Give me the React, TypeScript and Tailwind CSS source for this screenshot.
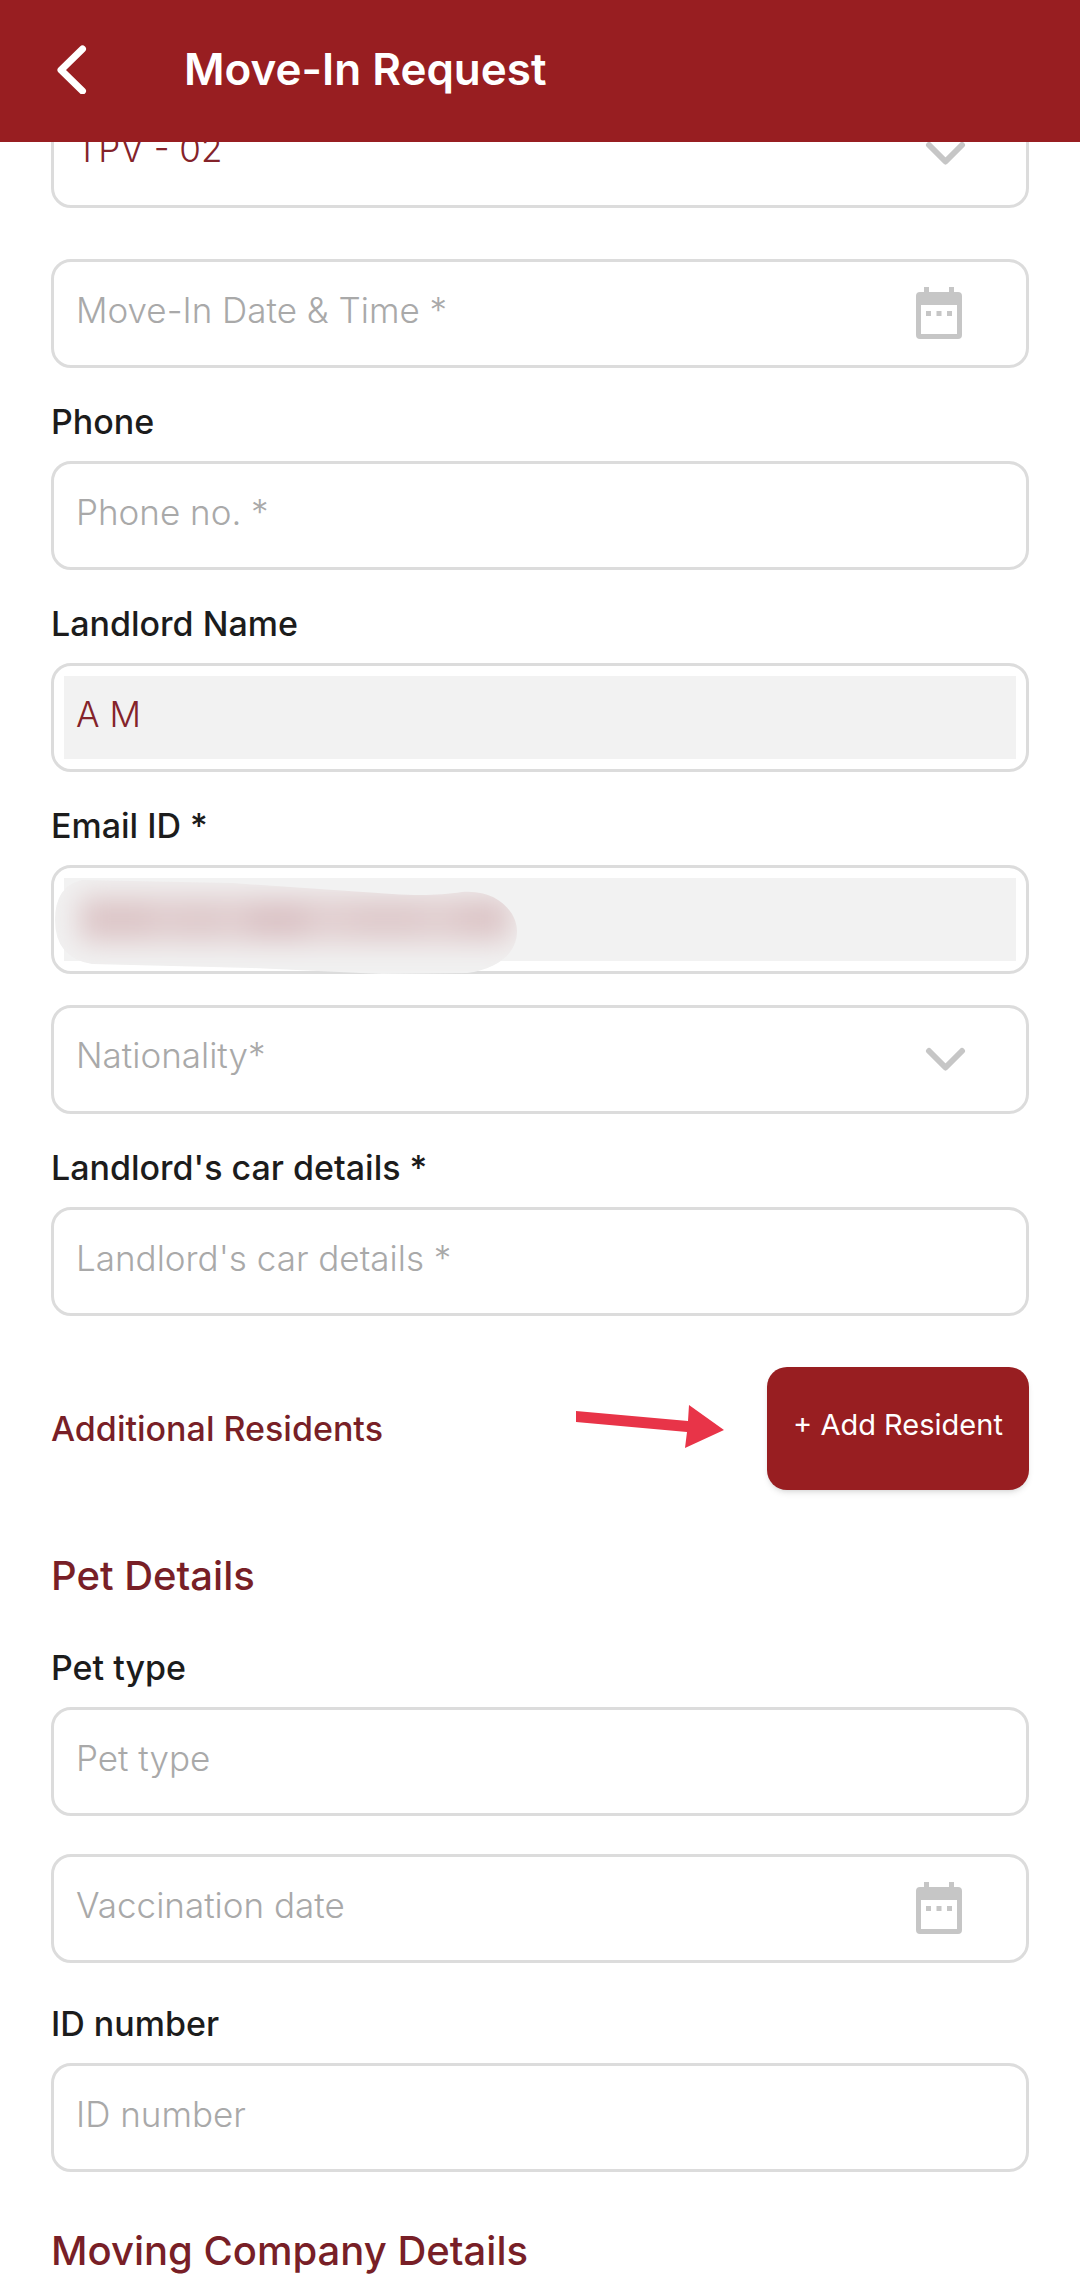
import { type ReactNode } from "react";

const ChevronLeft = () => (
  <svg width="32" height="50" viewBox="0 0 32 50" fill="none" stroke="currentColor" strokeWidth="7" strokeLinecap="round" strokeLinejoin="round">
    <path d="M26.500 5 L5 26 L26.500 47" />
  </svg>
);

const ChevronDown = () => (
  <svg className="pointer-events-none absolute right-15 top-6" width="54" height="54" viewBox="0 0 54 54" fill="none" stroke="#c6c6c6" strokeWidth="6" strokeLinecap="round" strokeLinejoin="round">
    <path d="M17 19 L33.500 35.500 L50 19" />
  </svg>
);

const Calendar = () => (
  <svg className="pointer-events-none absolute right-15 top-6" width="54" height="54" viewBox="0 0 54 54" fill="#c6c6c6">
    <path fillRule="evenodd" d="M8 6 H46 Q50 6 50 10 V49 Q50 53 46 53 H8 Q4 53 4 49 V10 Q4 6 8 6 Z M9 19 V48 H45 V19 Z" />
    <path d="M12 1 h5 v6 h-5 Z M37 1 h5 v6 h-5 Z M14 25 h5 v5 h-5 Z M24.500 25 h5 v5 h-5 Z M35 25 h5 v5 h-5 Z" />
  </svg>
);

// Smudge that hides the private email address
const Redaction = () => (
  <svg className="pointer-events-none absolute -left-0.5 -top-0.5" width="470" height="112" viewBox="0 0 470 112">
    <defs>
      <clipPath id="smudge">
        <path d="M30 14 L180 17 L340 28 C370 30 390 29 410 26 C445 23 465 46 465 65 C465 88 445 103 415 107 L330 108 L200 102 L40 98 Q3 92 3 54 Q3 20 30 14 Z" />
      </clipPath>
      <filter id="smudge-blur" x="-20%" y="-60%" width="140%" height="220%">
        <feGaussianBlur stdDeviation="14" />
      </filter>
    </defs>
    <g clipPath="url(#smudge)">
      <rect width="470" height="112" fill="#f1f1f1" />
      <g filter="url(#smudge-blur)">
        <rect x="26" y="28" width="435" height="50" fill="#e2d0d1" />
        <rect x="32" y="40" width="70" height="28" fill="#dcc4c6" />
        <rect x="120" y="42" width="50" height="26" fill="#dec9cb" />
        <rect x="195" y="40" width="60" height="30" fill="#dac1c4" />
        <rect x="300" y="40" width="70" height="26" fill="#dec9cb" />
        <rect x="405" y="38" width="50" height="28" fill="#dcc4c6" />
      </g>
    </g>
  </svg>
);

const fieldText =
  "block h-[83px] w-full appearance-none bg-transparent px-3 pb-2 text-[35px] font-light outline-none placeholder:text-[#a9a9a9] placeholder:opacity-100 disabled:bg-[#f2f2f2]";

const FieldBox = ({ children }: { children: ReactNode }) => (
  <div className="relative rounded-[20px] border-3 border-[#dcdcdc] p-2.5">{children}</div>
);

const Label = ({ htmlFor, children }: { htmlFor: string; children: ReactNode }) => (
  <label htmlFor={htmlFor} className="mb-4 block text-[34px] leading-[46px] font-medium text-[#1c1c1c]">
    {children}
  </label>
);

type InputFieldProps = {
  id: string;
  label?: string;
  placeholder?: string;
  value?: string;
  disabled?: boolean;
  children?: ReactNode;
};

const InputField = ({ id, label, placeholder, value, disabled, children }: InputFieldProps) => (
  <div>
    {label && <Label htmlFor={id}>{label}</Label>}
    <FieldBox>
      <input
        id={id}
        type="text"
        aria-label={label ? undefined : placeholder}
        placeholder={placeholder}
        defaultValue={value}
        disabled={disabled}
        className={`${fieldText} text-[#84232a]`}
      />
      {children}
    </FieldBox>
  </div>
);

const SectionTitle = ({ children }: { children: ReactNode }) => (
  <h2 className="text-[40px] leading-[56px] font-medium text-[#781f27]">{children}</h2>
);

const App = () => {
  return (
    <div className="bg-white font-['Inter',sans-serif]">
      <header className="sticky top-0 z-10 flex h-[142px] items-center gap-[96px] bg-[#981e21] px-14 pb-1 text-white">
        <button type="button" aria-label="Back">
          <ChevronLeft />
        </button>
        <h1 className="text-[44px] leading-[56px] font-semibold">Move-In Request</h1>
      </header>

      {/* The form is scrolled a little way under the header */}
      <main className="-mt-[43px] px-[51px]">
        <FieldBox>
          <select aria-label="Unit" className={`${fieldText} text-[#84232a]`}>
            <option>TPV - 02</option>
          </select>
          <ChevronDown />
        </FieldBox>

        <div className="mt-[51px] flex flex-col gap-[31px]">
          <InputField id="move-in" placeholder="Move-In Date & Time *">
            <Calendar />
          </InputField>
          <InputField id="phone" label="Phone" placeholder="Phone no. *" />
          <InputField id="landlord" label="Landlord Name" value="A M" disabled />
          <InputField id="email" label="Email ID *" disabled>
            <Redaction />
          </InputField>
          <FieldBox>
            <select aria-label="Nationality" className={`${fieldText} text-[#a9a9a9]`}>
              <option>Nationality*</option>
            </select>
            <ChevronDown />
          </FieldBox>
          <InputField id="car" label="Landlord's car details *" placeholder="Landlord's car details *" />
        </div>

        <div className="relative mt-[51px] flex items-center justify-between">
          <h2 className="text-[34px] leading-[47px] font-medium text-[#781f27]">Additional Residents</h2>
          <button
            type="button"
            className="h-[123px] w-[262px] rounded-[20px] bg-[#981e21] pb-2 text-[29px] text-white shadow-md"
          >
            + Add Resident
          </button>
          <svg className="absolute right-[304px] top-9" width="150" height="50" viewBox="0 0 150 50" fill="#e83448">
            <path d="M1 8 L113 18 L114 2 L149 27 L110 45 L112 29 L1 19 Z" />
          </svg>
        </div>

        <section className="mt-[58px]">
          <SectionTitle>Pet Details</SectionTitle>
          <div className="mt-[41px] flex flex-col gap-[38px]">
            <InputField id="pet-type" label="Pet type" placeholder="Pet type" />
            <InputField id="vaccination" placeholder="Vaccination date">
              <Calendar />
            </InputField>
            <InputField id="id-number" label="ID number" placeholder="ID number" />
          </div>
        </section>

        <section className="mt-[51px]">
          <SectionTitle>Moving Company Details</SectionTitle>
        </section>
      </main>
    </div>
  );
};

export default App;
